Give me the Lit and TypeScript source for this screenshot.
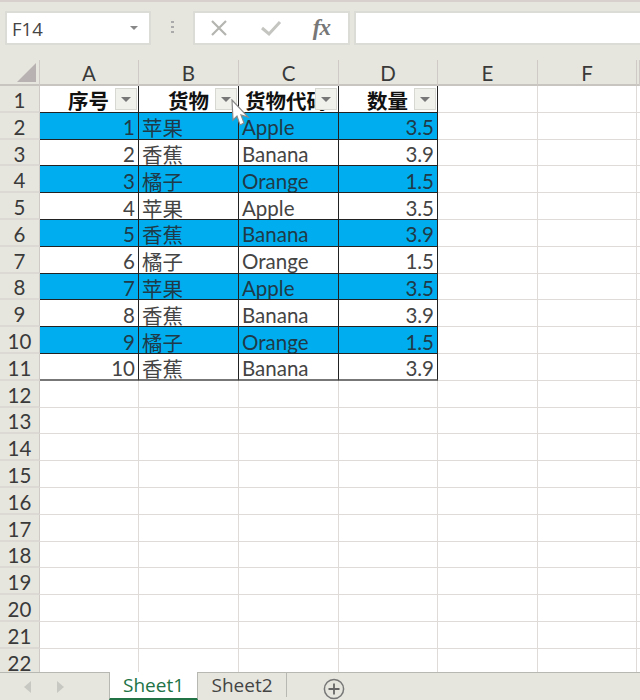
import { LitElement, html, css, svg } from "lit";
import { customElement } from "lit/decorators.js";

const DATA: [number, string, string, number][] = [
  [1, "苹果", "Apple", 3.5],
  [2, "香蕉", "Banana", 3.9],
  [3, "橘子", "Orange", 1.5],
  [4, "苹果", "Apple", 3.5],
  [5, "香蕉", "Banana", 3.9],
  [6, "橘子", "Orange", 1.5],
  [7, "苹果", "Apple", 3.5],
  [8, "香蕉", "Banana", 3.9],
  [9, "橘子", "Orange", 1.5],
  [10, "香蕉", "Banana", 3.9],
];
const COLS = ["A", "B", "C", "D", "E", "F", ""];

@customElement("app-root")
export class AppRoot extends LitElement {
  static styles = css`
    :host {
      display: flex;
      flex-direction: column;
      width: 640px;
      height: 700px;
      overflow: hidden;
      background: #e6e6df;
      font-family: Lato, "Noto Sans CJK SC", sans-serif;
      color: #444;
      position: relative;
    }
    .toolbar {
      height: 60px;
      flex: none;
      box-sizing: border-box;
      border-top: 2px solid #d8d0cc;
      padding: 9px 0 0 5px;
      display: flex;
      align-items: flex-start;
    }
    .box {
      height: 34px;
      box-sizing: border-box;
      background: #fff;
      border: 2px solid #dcdcd6;
      display: flex;
      align-items: center;
    }
    .name {
      width: 146px;
      padding: 0 11px 0 5px;
      justify-content: space-between;
      font-size: 18.5px;
      font-family: "Open Sans", sans-serif;
      color: #444;
    }
    .name .caret {
      border-top-color: #888;
    }
    .caret {
      width: 0;
      height: 0;
      border: 4px solid transparent;
      border-top: 4px solid #666;
      border-bottom: none;
    }
    .dots {
      width: 42px;
      display: flex;
      flex-direction: column;
      align-items: center;
      gap: 3px;
      padding-top: 10px;
      flex: none;
    }
    .dots i {
      width: 3px;
      height: 2px;
      background: #aaa;
    }
    .fx-btns {
      width: 157px;
      justify-content: space-between;
      padding: 0 18px 0 14px;
      flex: none;
    }
    .fx {
      font: italic bold 23px "Liberation Serif", serif;
      color: #777;
      letter-spacing: -1px;
    }
    .formula {
      flex: 1;
      margin-left: 4px;
      border-right: none;
    }
    .sheet {
      flex: 1;
      min-height: 0;
      overflow: hidden;
      display: grid;
      grid-template-columns: 40px 99px 100px 100px 99px 100px 99px 3px;
      grid-template-rows: 26px repeat(22, 26.8px);
      background: #fff;
      font-size: 20.5px;
    }
    .cell {
      box-sizing: border-box;
      border-right: 1px solid #dfdbd8;
      border-bottom: 1px solid #dfdbd8;
      padding: 3px 3px 0;
      display: flex;
      align-items: center;
      white-space: nowrap;
      overflow: hidden;
      position: relative;
      min-width: 0;
    }
    .head {
      background: #e6e6df;
      border-right: 1px solid #cfcac6;
      border-bottom: 2px solid #c8c4c0;
      justify-content: center;
      padding: 3px 0 0;
      color: #3a3a3a;
      line-height: 1;
    }
    .row-head {
      background: #e6e6df;
      border-right: 1px solid #cfcac6;
      border-bottom: 2px solid #dcd8d4;
      justify-content: center;
      padding: 3px 0 0;
      color: #3a3a3a;
    }
    .corner {
      align-items: flex-end;
      justify-content: flex-end;
      padding: 0;
    }
    .t {
      border-right: 1px solid #222;
      border-bottom: 1px solid #222;
    }
    .t.last {
      border-bottom: 2px solid #777;
    }
    .blue {
      background: #00aeef;
      color: #1f3a48;
    }
    .num {
      justify-content: flex-end;
      padding-right: 3px;
    }
    .title {
      font-weight: 700;
      color: #111;
      justify-content: flex-end;
      padding-right: 29px;
    }
    .title.clip {
      justify-content: flex-start;
      padding: 3px 0 0 6px;
    }
    .filter {
      position: absolute;
      right: 1px;
      top: 2px;
      width: 22px;
      height: 22px;
      box-sizing: border-box;
      background: #f1f1ec;
      border: 1px solid #d8d8d2;
      display: flex;
      align-items: center;
      justify-content: center;
    }
    .filter .caret {
      border-top-color: #777;
      border-width: 5px;
      border-bottom: none;
    }
    .tabs {
      height: 28px;
      flex: none;
      box-sizing: border-box;
      border-top: 1px solid #b8b8b2;
      display: flex;
      align-items: stretch;
      position: relative;
    }
    .nav {
      width: 109px;
      flex: none;
      display: flex;
      align-items: center;
      gap: 22px;
      padding-left: 23px;
      box-sizing: border-box;
    }
    .tab {
      width: 89px;
      flex: none;
      box-sizing: border-box;
      display: flex;
      align-items: center;
      justify-content: center;
      margin-top: -1px;
      font-family: "Open Sans", sans-serif;
      font-size: 19px;
      color: #444;
    }
    .tab.on {
      background: #fff;
      color: #217346;
      border-left: 1px solid #b8b8b2;
      border-right: 1px solid #b8b8b2;
      border-bottom: 2px solid #217346;
    }
    .tab.off {
      border-right: 1px solid #b8b8b2;
      margin-top: 0;
      height: 24px;
    }
    .plus {
      margin: 5px 0 0 36px;
    }
    .cursor {
      position: absolute;
      left: 230px;
      top: 99px;
    }
  `;

  private cell(cls: string, content: unknown) {
    return html`<div class="cell ${cls}">${content}</div>`;
  }

  private filter() {
    return html`<span class="filter"><span class="caret"></span></span>`;
  }

  private renderRows() {
    const out: unknown[] = [];
    const titles = ["序号", "货物", "货物代码", "数量"];
    out.push(this.cell("row-head", "1"));
    titles.forEach((t, i) => {
      out.push(
        this.cell(
          `t title ${i === 2 ? "clip" : ""}`,
          html`${t}${this.filter()}`
        )
      );
    });
    out.push(this.cell("", ""), this.cell("", ""), this.cell("", ""));
    DATA.forEach((r, i) => {
      const last = i === DATA.length - 1 ? "last" : "";
      const blue = i % 2 === 0 ? "blue" : "";
      const base = `t ${last} ${blue}`;
      out.push(this.cell("row-head", String(i + 2)));
      out.push(this.cell(`${base} num`, r[0]));
      out.push(this.cell(base, r[1]));
      out.push(this.cell(base, r[2]));
      out.push(this.cell(`${base} num`, r[3].toFixed(1)));
      out.push(this.cell("", ""), this.cell("", ""), this.cell("", ""));
    });
    for (let n = 12; n <= 22; n++) {
      out.push(this.cell("row-head", String(n)));
      for (let c = 0; c < 7; c++) out.push(this.cell("", ""));
    }
    return out;
  }

  render() {
    return html`
      <div class="toolbar">
        <div class="box name">F14<span class="caret"></span></div>
        <div class="dots"><i></i><i></i><i></i></div>
        <div class="box fx-btns">
          <svg width="20" height="20" viewBox="0 0 20 20">
            <path d="M3 3L17 17M17 3L3 17" stroke="#b4b4b0" stroke-width="2.2" fill="none" />
          </svg>
          <svg width="22" height="20" viewBox="0 0 22 20">
            <path d="M2 10L9 16L20 4" stroke="#c4c4c0" stroke-width="3" fill="none" />
          </svg>
          <span class="fx">fx</span>
        </div>
        <div class="box formula"></div>
      </div>
      <div class="sheet">
        <div class="cell head corner">
          <svg width="22" height="21" viewBox="0 0 22 21">
            ${svg`<path d="M0 19H19V0Z" fill="#b9b2b2" />`}
          </svg>
        </div>
        ${COLS.map((c) => this.cell("head", c))} ${this.renderRows()}
      </div>
      <div class="tabs">
        <div class="nav">
          <svg width="10" height="14" viewBox="0 0 10 14"><path d="M8 1V13L1 7Z" fill="#c8c8c2" /></svg>
          <svg width="10" height="14" viewBox="0 0 10 14"><path d="M2 1V13L9 7Z" fill="#c8c8c2" /></svg>
        </div>
        <div class="tab on">Sheet1</div>
        <div class="tab off">Sheet2</div>
        <svg class="plus" width="22" height="22" viewBox="0 0 22 22">
          <circle cx="11" cy="11" r="9.6" fill="none" stroke="#777" stroke-width="1.5" />
          <path d="M11 5.5V16.5M5.5 11H16.5" stroke="#666" stroke-width="1.8" />
        </svg>
      </div>
      <svg class="cursor" width="20" height="28" viewBox="0 0 20 28">
        <path
          d="M2 1L3 21L7 17L10 26L14 24L11 16L18 18Z"
          fill="#fff"
          stroke="#8a8a8a"
          stroke-width="1.2"
        />
      </svg>
    `;
  }
}
